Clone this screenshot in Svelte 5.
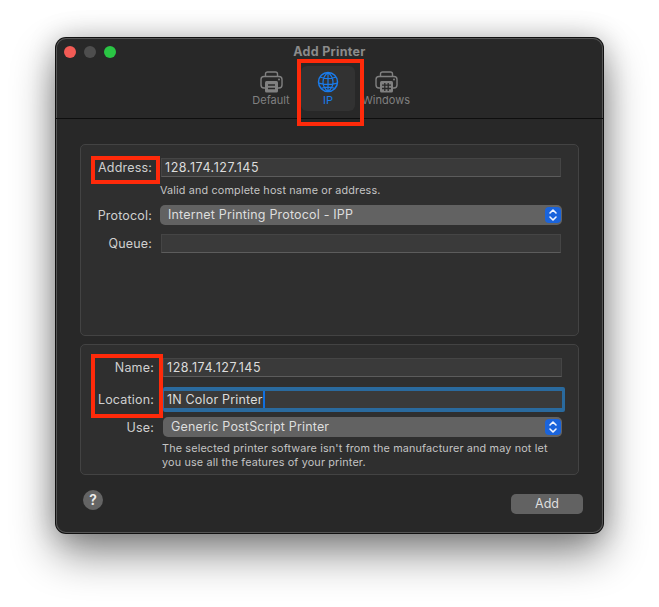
<script>
  const tabs = [
    { id: 'default', label: 'Default' },
    { id: 'ip', label: 'IP' },
    { id: 'windows', label: 'Windows' }
  ];
  let active = $state('ip');
</script>

{#snippet chevrons()}
  <span class="stepper">
    <svg width="10" height="14" viewBox="0 0 10 14" fill="none" stroke="#f2f6ff" stroke-width="1.6" stroke-linecap="round" stroke-linejoin="round">
      <path d="M2 5l3-3 3 3M2 9l3 3 3-3" />
    </svg>
  </span>
{/snippet}

<div class="page">
  <div class="window">
    <header class="titlebar">
      <div class="lights">
        <span class="light red"></span>
        <span class="light grey"></span>
        <span class="light green"></span>
      </div>
      <h1 class="title">Add Printer</h1>
      <div class="tabs">
        {#each tabs as tab (tab.id)}
          <button class="tab" class:active={active === tab.id} type="button" onclick={() => (active = tab.id)}>
            {#if tab.id === 'ip'}
              <svg width="22" height="22" viewBox="0 0 22 22" fill="none" stroke="currentColor" stroke-width="1.5">
                <circle cx="11" cy="11" r="9.5" />
                <path d="M11 1.5c-3.4 2.6-5 5.8-5 9.5s1.6 6.9 5 9.5M11 1.5c3.4 2.600 5 5.800 5 9.500s-1.600 6.900-5 9.500M11 1.500v19M3 6c5 2 11 2 16 0M1.600 12.200c6 1.600 13 1.600 18.800 0M4 17.500c4-1.600 10-1.600 14 0" stroke-width="1.2" />
              </svg>
            {:else}
              <svg width="23" height="22" viewBox="0 0 23 22" fill="none">
                <path d="M5.500 6V3a2 2 0 0 1 2-2h8a2 2 0 0 1 2 2v3" stroke="currentColor" stroke-width="1.400" />
                <path d="M5 17H4a3 3 0 0 1-3-3V8.500a3 3 0 0 1 3-3h15a3 3 0 0 1 3 3V14a3 3 0 0 1-3 3h-1" stroke="currentColor" stroke-width="1.400" />
                <rect x="5" y="10" width="13" height="11.500" rx="1.500" fill="currentColor" />
                <circle cx="19" cy="8.500" r="1" fill="currentColor" />
                {#if tab.id === 'default'}
                  <path d="M8 14h7M8 17.500h7" stroke="#282828" stroke-width="1.400" />
                {:else}
                  <path d="M9.800 12v8M13.200 12v8M7 14.200h9M7 17.500h9" stroke="#282828" stroke-width="1.300" />
                {/if}
              </svg>
            {/if}
            <span>{tab.label}</span>
          </button>
        {/each}
      </div>
    </header>

    <main class="content">
      <section class="panel first">
        <div class="row">
          <span class="label">Address:</span>
          <div class="field ip">128.174.127.145</div>
        </div>
        <p class="hint one">Valid and complete host name or address.</p>
        <div class="row protocol">
          <span class="label">Protocol:</span>
          <div class="select">Internet Printing Protocol - IPP{@render chevrons()}</div>
        </div>
        <div class="row queue">
          <span class="label">Queue:</span>
          <div class="field"></div>
        </div>
      </section>

      <section class="panel second">
        <div class="row">
          <span class="label">Name:</span>
          <div class="field ip">128.174.127.145</div>
        </div>
        <div class="row location">
          <span class="label">Location:</span>
          <div class="field focused">1N Color Printer<i class="caret"></i></div>
        </div>
        <div class="row use">
          <span class="label">Use:</span>
          <div class="select">Generic PostScript Printer{@render chevrons()}</div>
        </div>
        <p class="hint two">The selected printer software isn't from the manufacturer and may not let<br />you use all the features of your printer.</p>
      </section>

      <footer class="actions">
        <span class="help">?</span>
        <button class="add" type="button">Add</button>
      </footer>
    </main>

    <div class="mark mark-ip"></div>
    <div class="mark mark-address"></div>
    <div class="mark mark-names"></div>
  </div>
</div>

<style>
  :global(body) {
    background: #fff;
    font-family: Inter, "Liberation Sans", sans-serif;
  }

  .page {
    width: 659px;
    height: 607px;
    padding: 38px 0 0 56px;
    box-sizing: border-box;
    overflow: hidden;
  }

  .window {
    position: relative;
    width: 547px;
    height: 495px;
    box-sizing: border-box;
    background: #282828;
    border-radius: 10px;
    box-shadow:
      0 0 0 1px #555 inset,
      0 0 0 1px #111,
      0 20px 44px rgba(0, 0, 0, 0.48),
      0 0 28px rgba(0, 0, 0, 0.22);
    display: flex;
    flex-direction: column;
    color: #d6d6d6;
  }

  .titlebar {
    height: 81px;
    box-sizing: border-box;
    flex-shrink: 0;
    border-bottom: 1px solid #0e0e0e;
    display: flex;
    flex-direction: column;
    align-items: center;
    position: relative;
    padding-top: 6px;
  }

  .lights {
    position: absolute;
    left: 8px;
    top: 8px;
    display: flex;
    gap: 8px;
  }

  .light {
    width: 12px;
    height: 12px;
    border-radius: 50%;
  }

  .red { background: #f25b55; }
  .grey { background: #4e4e4e; }
  .green { background: #2ac544; }

  .title {
    margin: 0;
    font-size: 12.5px;
    line-height: 16px;
    font-weight: 700;
    letter-spacing: 0.3px;
    color: #8b8b8b;
  }

  .tabs {
    display: flex;
    justify-content: center;
    margin-top: 6px;
    margin-left: -2px;
    gap: 3px;
  }

  .tab {
    width: 54px;
    height: 45px;
    padding: 5px 0 0;
    margin: 0;
    border: 0;
    border-radius: 6px;
    background: none;
    font: inherit;
    font-size: 11px;
    line-height: 14px;
    color: #808080;
    display: flex;
    flex-direction: column;
    align-items: center;
    white-space: nowrap;
  }

  .tab:last-child { margin-left: 1px; }

  .tab.active {
    background: #323232;
    color: #1a7bea;
  }

  .content {
    flex: 1;
    padding: 25px 24px 0;
    display: flex;
    flex-direction: column;
  }

  .panel {
    width: 499px;
    box-sizing: border-box;
    background: #2f2f2f;
    border: 1px solid #434343;
    border-radius: 5px;
    padding-top: 13px;
    font-size: 12.5px;
    letter-spacing: 0.18px;
  }

  .first { height: 192px; }
  .second { height: 131px; margin-top: 8px; }

  .row {
    display: grid;
    align-items: center;
    grid-template-columns: 71px 1fr;
    column-gap: 8px;
    width: 480px;
  }

  .second .row {
    grid-template-columns: 73px 1fr;
    column-gap: 9px;
    width: 481px;
  }

  .label {
    text-align: right;
    color: #cfcfcf;
  }

  .field {
    height: 19px;
    box-sizing: border-box;
    line-height: 18px;
    padding-left: 3px;
    background: #3a3a3a;
    border: 1px solid #454545;
    border-bottom-color: #5c5c5c;
    color: #dcdcdc;
  }

  .ip { letter-spacing: 0.55px; }

  .first .row .field { margin-left: 1px; }
  .first .select { margin-right: -1px; }

  .select {
    position: relative;
    height: 20px;
    line-height: 20px;
    padding-left: 8px;
    background: #626262;
    border-radius: 5px;
    color: #dedede;
  }

  .stepper {
    position: absolute;
    right: 1px;
    top: 2px;
    width: 16px;
    height: 16px;
    border-radius: 4px;
    background: #1a64dc;
    display: flex;
    align-items: center;
    justify-content: center;
  }

  .hint {
    margin: 0;
    font-size: 10.8px;
    line-height: 14px;
    letter-spacing: 0.16px;
    color: #c4c4c4;
  }

  .hint.one { margin: 7px 0 7px 79px; }
  .queue { margin-top: 9px; }

  .location { margin-top: 10px; }

  .focused {
    position: relative;
    height: 25px;
    margin-right: -3px;
    border-style: solid;
    border-color: #2a6a9e;
    border-width: 4px 3px 4px 1px;
    border-radius: 2px;
    line-height: 17px;
  }

  .caret {
    position: absolute;
    top: 0;
    width: 2px;
    height: 17px;
    background: #0f6fe0;
  }

  .use { margin-top: 5px; }
  .hint.two { margin: 5px 0 0 81px; }

  .actions {
    display: flex;
    justify-content: space-between;
    align-items: flex-start;
    margin: 15px -4px 0 3px;
  }

  .help {
    width: 20px;
    height: 20px;
    border-radius: 50%;
    background: #646464;
    color: #eee;
    font-size: 14px;
    font-weight: 600;
    line-height: 20px;
    text-align: center;
  }

  .add {
    width: 72px;
    height: 20px;
    margin-top: 4px;
    padding: 0 0 1px;
    border: 0;
    border-radius: 5px;
    background: #626262;
    color: #dedede;
    font: inherit;
    font-size: 12.5px;
  }

  .mark {
    position: absolute;
    border: 4px solid #ff2a0a;
    box-sizing: border-box;
    pointer-events: none;
  }

  .mark-ip { left: 241px; top: 21px; width: 67px; height: 67px; }
  .mark-address { left: 35px; top: 118px; width: 69px; height: 28px; }
  .mark-names { left: 35px; top: 316px; width: 72px; height: 64px; }
</style>
